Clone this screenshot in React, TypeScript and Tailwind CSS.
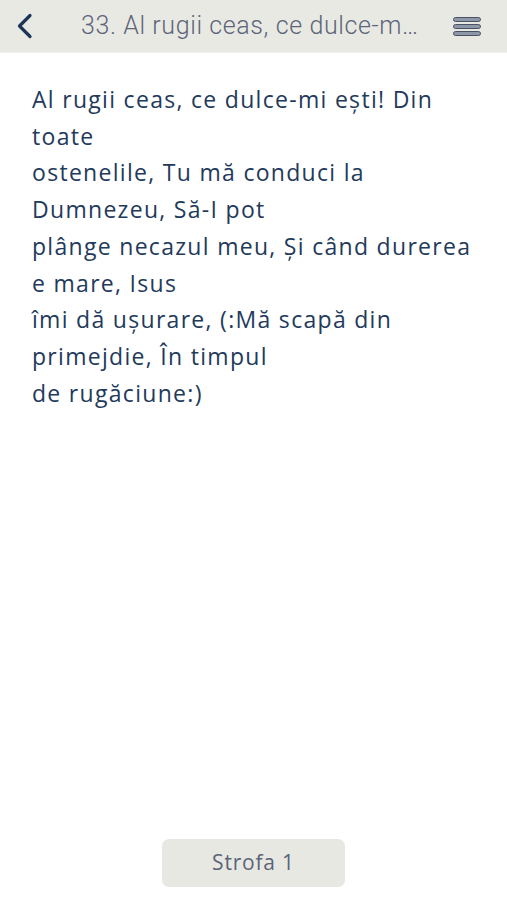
import React from 'react';

const lines = [
  'Al rugii ceas, ce dulce-mi ești! Din',
  'toate',
  'ostenelile, Tu mă conduci la',
  'Dumnezeu, Să-I pot',
  'plânge necazul meu, Și când durerea',
  'e mare, Isus',
  'îmi dă ușurare, (:Mă scapă din',
  'primejdie, În timpul',
  'de rugăciune:)',
];

const App: React.FC = () => {
  return (
    <div className="flex h-[900px] w-full flex-col bg-white">
      {/* Top bar */}
      <div className="flex h-[53px] shrink-0 items-center bg-[#e9e9e4] border-b border-[#f1f1ee]">
        <button className="flex h-full w-[64px] items-center pl-[16px]">
          <svg width="17" height="26" viewBox="0 0 17 26" fill="none">
            <path d="M14 2.5 L3.5 13 L14 23.5" stroke="#1d3556" strokeWidth="3.2" strokeLinecap="round" strokeLinejoin="round" />
          </svg>
        </button>
        <div className="ml-[17px] whitespace-nowrap font-['Roboto',sans-serif] text-[25px] font-light tracking-[0.6px] text-[#5d6579]">
          33. Al rugii ceas, ce dulce-m…
        </div>
        <div className="ml-auto mr-[26px] flex flex-col gap-[2px]">
          {[0, 1, 2].map(i => (
            <span key={i} className="block h-[5px] w-[28px] rounded-[3px] border border-[#4b5263] bg-[#8d97a8]" />
          ))}
        </div>
      </div>

      {/* Verse text */}
      <div className="flex-1 px-[32px] pt-[28px] font-['Open_Sans',sans-serif] text-[23px] leading-[36.7px] tracking-[1.3px] text-[#233a5b]">
        {lines.map((l, i) => (
          <div key={i} className="whitespace-nowrap">{l}</div>
        ))}
      </div>

      {/* Strophe selector */}
      <div className="flex shrink-0 justify-center pb-[13px]">
        <button className="h-[48px] w-[183px] rounded-[7px] bg-[#e8e8e3] font-['Open_Sans',sans-serif] text-[21px] tracking-[0.8px] text-[#5a6478]">
          Strofa 1
        </button>
      </div>
    </div>
  );
};

export default App;
